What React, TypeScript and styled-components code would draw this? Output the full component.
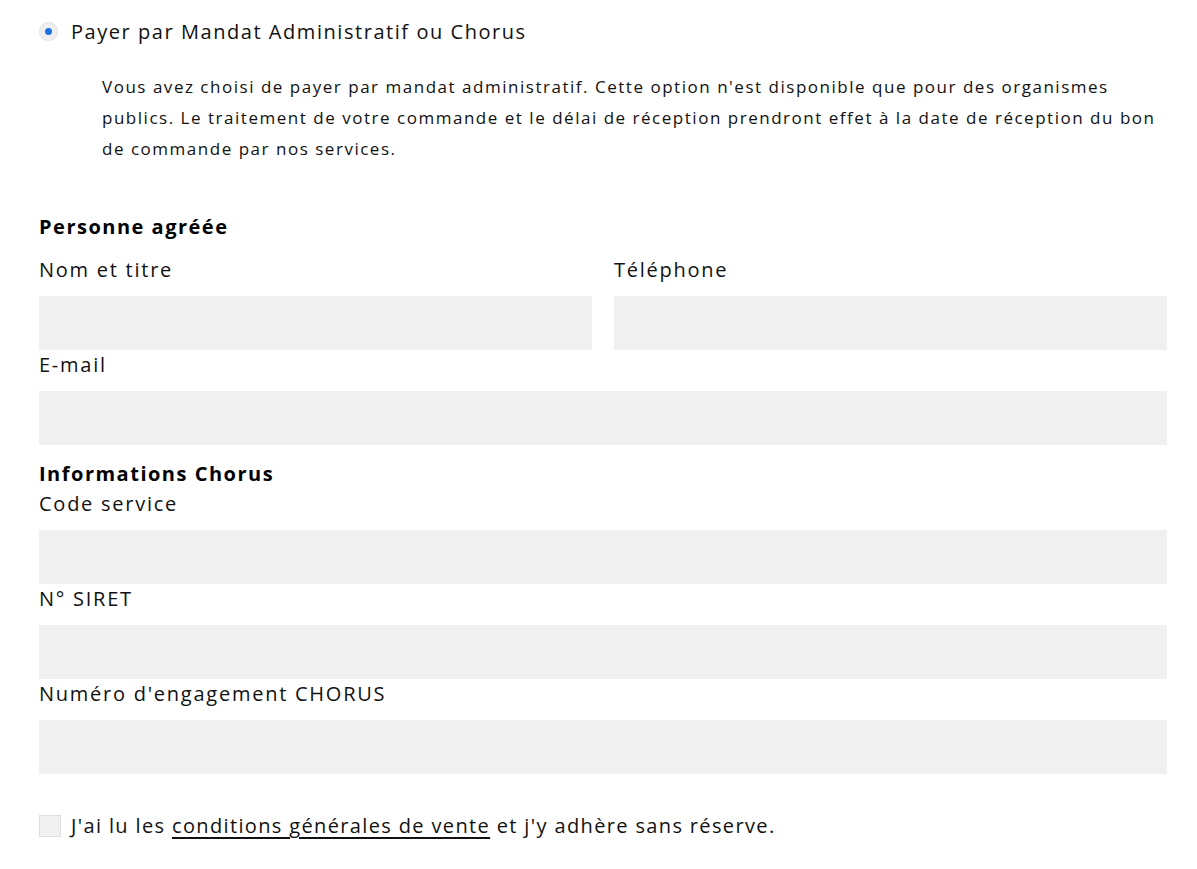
import React from "react";
import styled, { createGlobalStyle } from "styled-components";

const Global = createGlobalStyle`
  html, body { margin: 0; padding: 0; background: #fff; }
  body { font-family: "Open Sans", "Liberation Sans", sans-serif; color: #111; }
  * { box-sizing: border-box; }
`;

const Page = styled.div`
  width: 1197px;
  padding: 14px 30px 0 39px;
`;

const OptionRow = styled.label`
  display: flex;
  align-items: center;
  gap: 13px;
  height: 34px;
  font-size: 20px;
  letter-spacing: 1.55px;
  color: #111;
`;

const Radio = styled.span`
  width: 19px;
  height: 19px;
  border-radius: 50%;
  background: #efefef;
  border: 1px solid #e2e2e2;
  display: flex;
  align-items: center;
  justify-content: center;
  &::after {
    content: "";
    width: 7px;
    height: 7px;
    border-radius: 50%;
    background: #1f72e4;
  }
`;

const Description = styled.p`
  margin: 23px 0 0 63px;
  font-size: 17px;
  line-height: 31px;
  letter-spacing: 1.52px;
  color: #111;
  white-space: nowrap;
`;

const SectionTitle = styled.h3<{ $top: number; $bottom: number }>`
  margin: ${(p) => p.$top}px 0 ${(p) => p.$bottom}px 0;
  font-size: 20px;
  line-height: 30px;
  font-weight: 700;
  letter-spacing: 1.5px;
  color: #000;
`;

const Row = styled.div`
  display: grid;
  grid-template-columns: 1fr 1fr;
  column-gap: 22px;
  width: 1128px;
`;

const Field = styled.div`
  display: flex;
  flex-direction: column;
  width: 100%;
`;

const Label = styled.label`
  font-size: 20px;
  line-height: 30px;
  letter-spacing: 1.75px;
  color: #111;
  margin-bottom: 11px;
`;

const Input = styled.input`
  width: 100%;
  height: 54px;
  border: none;
  outline: none;
  background: #f0f0f0;
  padding: 0 14px;
  font-size: 18px;
  font-family: inherit;
`;

const Form = styled.div`
  width: 1128px;
`;

const AcceptRow = styled.div`
  display: flex;
  align-items: center;
  gap: 10px;
  margin-top: 38px;
  font-size: 20px;
  letter-spacing: 1.36px;
  color: #111;
`;

const Checkbox = styled.span`
  width: 22px;
  height: 22px;
  background: #f0f0f0;
  border: 1px solid #dedede;
`;

const Link = styled.a`
  color: #111;
  text-decoration: underline;
  text-underline-offset: 4px;
  text-decoration-thickness: 2px;
`;

export default function App() {
  return (
    <>
      <Global />
      <Page>
        <OptionRow>
          <Radio />
          Payer par Mandat Administratif ou Chorus
        </OptionRow>
        <Description>
          Vous avez choisi de payer par mandat administratif. Cette option n'est disponible que pour des organismes
          <br />
          publics. Le traitement de votre commande et le délai de réception prendront effet à la date de réception du bon
          <br />
          de commande par nos services.
        </Description>
        <Form>
          <SectionTitle $top={48} $bottom={13}>Personne agréée</SectionTitle>
          <Row>
            <Field>
              <Label>Nom et titre</Label>
              <Input />
            </Field>
            <Field>
              <Label>Téléphone</Label>
              <Input />
            </Field>
          </Row>
          <Field>
            <Label>E-mail</Label>
            <Input />
          </Field>
          <SectionTitle $top={14} $bottom={0}>Informations Chorus</SectionTitle>
          <Field>
            <Label>Code service</Label>
            <Input />
          </Field>
          <Field>
            <Label>N° SIRET</Label>
            <Input />
          </Field>
          <Field>
            <Label>Numéro d'engagement CHORUS</Label>
            <Input />
          </Field>
          <AcceptRow>
            <Checkbox />
            <span>
              J'ai lu les <Link href="#">conditions générales de vente</Link> et j'y adhère sans réserve.
            </span>
          </AcceptRow>
        </Form>
      </Page>
    </>
  );
}
